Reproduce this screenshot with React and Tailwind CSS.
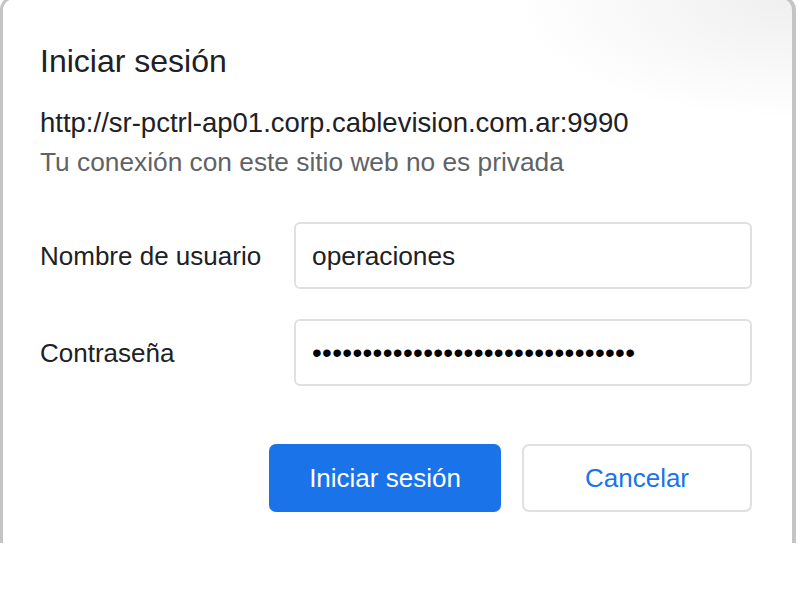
import React from 'react';

const font = { fontFamily: '"Liberation Sans", Arial, sans-serif' };

const Field = ({ label, children }) => (
    <div className="flex items-center">
        <div className="w-[254px] text-[26px] leading-[32px] text-[#202124]">{label}</div>
        <div className="flex-1 h-[67px] flex items-center pl-[16px] border-2 border-[#e0e0e0] rounded-[6px] bg-white">
            {children}
        </div>
    </div>
);

const App = () => {
    const dots = '•'.repeat(32);

    return (
        <div className="w-[800px] h-[600px] bg-white overflow-hidden" style={font}>
            <div className="w-[796px] -mt-[4px] border-l-[3px] border-r-[4px] border-t-[3px] border-[#c4c4c4] rounded-t-[14px] bg-[radial-gradient(ellipse_280px_120px_at_100%_0%,#efefef,#ffffff)] pt-[43px] pl-[37px] pr-[40px] pb-[31px]">
                <h1 className="text-[32px] leading-[38px] text-[#202124] font-normal">Iniciar sesión</h1>

                <p className="mt-[27px] text-[27.5px] leading-[32px] text-[#202124]">
                    http://sr-pctrl-ap01.corp.cablevision.com.ar:9990
                </p>
                <p className="mt-[7px] text-[26.3px] leading-[32px] text-[#5f6368]">
                    Tu conexión con este sitio web no es privada
                </p>

                <div className="mt-[44px] flex flex-col gap-[30px]">
                    <Field label="Nombre de usuario">
                        <span className="text-[26.3px] leading-[32px] text-[#202124]">operaciones</span>
                    </Field>
                    <Field label="Contraseña">
                        <span className="text-[28px] leading-[32px] tracking-[0.3px] text-black">{dots}</span>
                    </Field>
                </div>

                <div className="mt-[58px] flex justify-end gap-[21px]">
                    <button className="w-[232px] h-[68px] rounded-[7px] bg-[#1a73e8] text-white text-[26px]">
                        Iniciar sesión
                    </button>
                    <button className="w-[230px] h-[68px] rounded-[7px] border-2 border-[#e0e0e0] bg-white text-[#1a73e8] text-[26px]">
                        Cancelar
                    </button>
                </div>
            </div>
        </div>
    );
};

export default App;
